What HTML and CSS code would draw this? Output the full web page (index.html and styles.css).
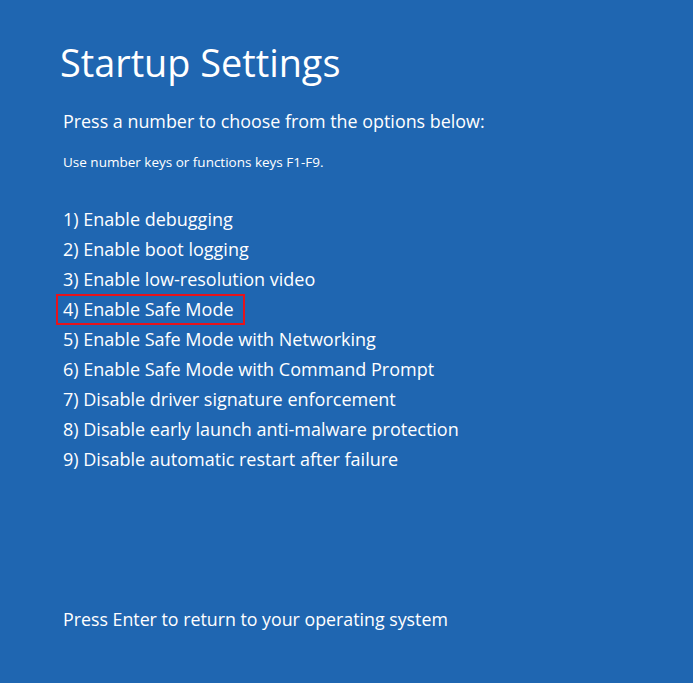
FILE: index.html
```html
<!DOCTYPE html>
<html>

<head>
    <meta charset="utf-8">
    <meta name="viewport" content="width=device-width">
    <title>Startup Settings</title>
    <link rel="stylesheet" href="styles.css">
</head>

<body>
    <div class="screen">
        <h1 class="title">Startup Settings</h1>
        <p class="prompt">Press a number to choose from the options below:</p>
        <p class="hint">Use number keys or functions keys F1-F9.</p>
        <ul class="options">
            <li>1) Enable debugging</li>
            <li>2) Enable boot logging</li>
            <li>3) Enable low-resolution video</li>
            <li><span class="marked">4) Enable Safe Mode</span></li>
            <li>5) Enable Safe Mode with Networking</li>
            <li>6) Enable Safe Mode with Command Prompt</li>
            <li>7) Disable driver signature enforcement</li>
            <li>8) Disable early launch anti-malware protection</li>
            <li>9) Disable automatic restart after failure</li>
        </ul>
        <p class="footer">Press Enter to return to your operating system</p>
    </div>
</body>

</html>
```

FILE: styles.css
```css
* {
    margin: 0;
    padding: 0;
    box-sizing: border-box;
}

html,
body {
    height: 100%;
}

body {
    background: #1f66b1;
    color: #fff;
    font-family: "Open Sans", "Noto Sans", sans-serif;
}

.screen {
    height: 100%;
    display: flex;
    flex-direction: column;
    padding: 36px 0 0 63px;
}

.title {
    font-weight: 400;
    font-size: 37.8px;
    line-height: 54px;
    margin-left: -3px;
}

.prompt {
    font-size: 17.9px;
    line-height: 26px;
    margin-top: 18px;
}

.hint {
    font-size: 13.5px;
    line-height: 18px;
    margin-top: 19px;
}

.options {
    list-style: none;
    margin-top: 33px;
    font-size: 18px;
    line-height: 30px;
}

.options li {
    height: 30px;
}

.marked {
    display: inline-block;
    vertical-align: top;
    margin: 0 0 0 -7px;
    padding: 0 9px 0 5px;
    border: 2px solid #e8141c;
    line-height: 27px;
}

.footer {
    font-size: 17.8px;
    line-height: 26px;
    margin-top: 132px;
}
```
